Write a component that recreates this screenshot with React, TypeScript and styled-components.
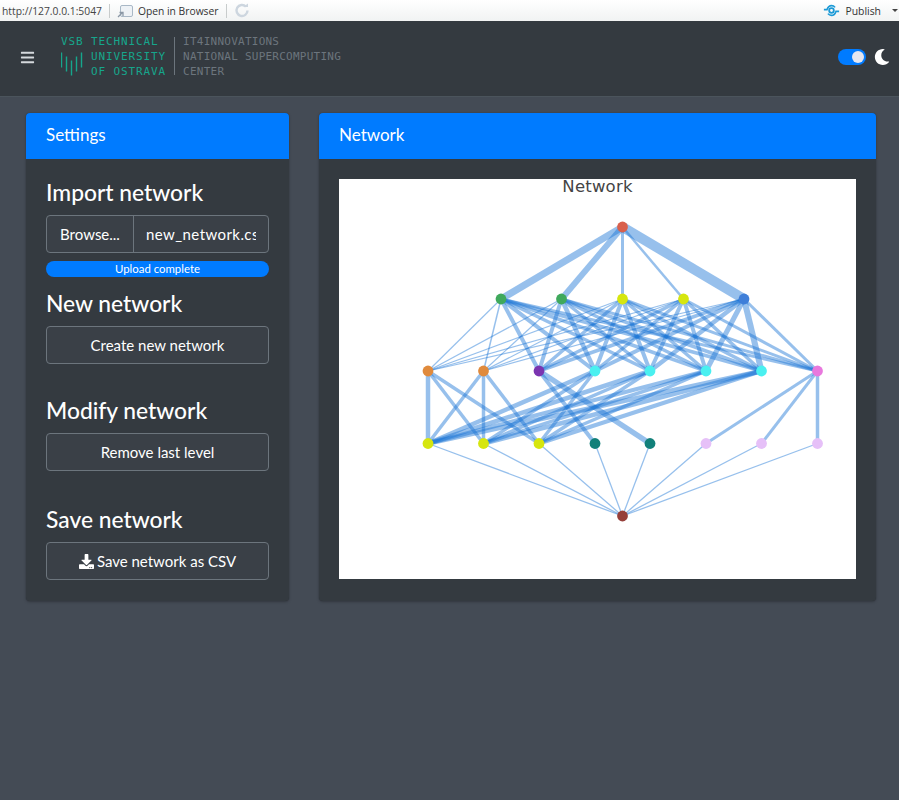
import React from "react"
import styled, { createGlobalStyle } from "styled-components"
import { FaBars, FaDownload, FaMoon } from "react-icons/fa"

const GlobalStyle = createGlobalStyle`
  html, body {
    margin: 0;
    padding: 0;
    background: #444b55;
  }
  * {
    box-sizing: border-box;
  }
`

const Page = styled.div`
  width: 899px;
  min-height: 800px;
  background: #444b55;
  font-family: "Lato", "Liberation Sans", sans-serif;
  color: #fff;
`

const ViewerBar = styled.div`
  height: 21px;
  display: flex;
  align-items: center;
  background: linear-gradient(#ffffff, #f1f3f3);
  font-family: "Open Sans", "Liberation Sans", sans-serif;
  font-size: 10.3px;
  color: #333;
  padding-left: 2px;
`
const BarUrl = styled.span`
  color: #444;
`
const BarSep = styled.span`
  width: 1px;
  height: 14px;
  margin: 0 7px 0 7px;
  background: #c8cccc;
`
const BarAction = styled.span`
  display: flex;
  align-items: center;
  gap: 5px;
`
const PublishGroup = styled.span`
  margin-left: auto;
  display: flex;
  align-items: center;
  gap: 5px;
  padding-right: 1px;
  font-size: 10.4px;
`
const Caret = styled.span`
  width: 0;
  height: 0;
  margin-left: 6px;
  border-left: 3px solid transparent;
  border-right: 3px solid transparent;
  border-top: 3px solid #444;
`

const Navbar = styled.header`
  height: 76px;
  display: flex;
  align-items: center;
  background: #343a40;
  border-bottom: 1px solid #4b545c;
  padding: 0 9px 0 20px;
`
const MenuButton = styled.span`
  display: flex;
  width: 41px;
  color: #d5d9dd;
  font-size: 15px;
  margin-top: -3px;
`
const Logo = styled.div`
  display: flex;
  align-items: center;
  font-family: "DejaVu Sans Mono", "Liberation Mono", monospace;
  font-size: 11px;
  line-height: 15px;
  margin-top: -5px;
`
const Vsb = styled.div`
  display: grid;
  grid-template-columns: 30px auto;
  color: #16a68c;
  letter-spacing: 0.88px;
  white-space: nowrap;
`
const VsbTop = styled.div`
  grid-column: 1 / 3;
`
const VsbMarks = styled.svg`
  grid-row: 2 / 4;
  margin-top: 3px;
`
const LogoDivider = styled.span`
  width: 1px;
  height: 38px;
  margin: 0 8px;
  background: #6c757d;
`
const Center = styled.div`
  color: #6c757d;
  letter-spacing: 0.25px;
  white-space: nowrap;
`
const ThemeControls = styled.div`
  margin-left: auto;
  display: flex;
  align-items: center;
  gap: 8px;
  margin-top: -4px;
`
const Toggle = styled.span`
  width: 28px;
  height: 16px;
  border-radius: 8px;
  background: #007bff;
  display: flex;
  justify-content: flex-end;
  align-items: center;
  padding-right: 2px;
`
const ToggleKnob = styled.span`
  width: 12px;
  height: 12px;
  border-radius: 50%;
  background: #e4e6f0;
`
const MoonWrap = styled.span`
  display: flex;
  color: #fff;
  font-size: 16px;
`

const Content = styled.main`
  display: grid;
  grid-template-columns: 263px 557px;
  gap: 30px;
  padding: 16px 23px 0 26px;
  align-items: start;
`
const Card = styled.section`
  background: #343a40;
  border-radius: 4px;
  overflow: hidden;
  box-shadow: 0 0 1px rgba(0, 0, 0, 0.25), 0 1px 3px rgba(0, 0, 0, 0.25);
`
const CardHeader = styled.div`
  height: 46px;
  display: flex;
  align-items: center;
  padding: 0 20px 3px 20px;
  background: #007bff;
  font-size: 17px;
`
const SettingsBody = styled.div`
  padding: 20px 20px 21px;
`
const PlotBody = styled.div`
  padding: 20px;
  height: 442px;
`
const Heading = styled.h3<{ $top?: number }>`
  margin: ${(p) => p.$top ?? 0}px 0 7px;
  font-size: 22.8px;
  line-height: 27px;
  padding-bottom: 2px;
  font-weight: 500;
`
const OutlineButton = styled.button`
  width: 100%;
  height: 38px;
  display: flex;
  align-items: center;
  justify-content: center;
  gap: 3px;
  background: #3a4047;
  border: 1px solid #6c757d;
  border-radius: 4px;
  color: #fff;
  font-family: inherit;
  font-size: 15px;
  padding: 0;
`
const FileGroup = styled.div`
  height: 38px;
  display: flex;
  align-items: center;
  border: 1px solid #6c757d;
  border-radius: 4px;
  background: #3a4047;
  font-size: 15px;
`
const BrowseLabel = styled.span`
  width: 87px;
  height: 100%;
  flex: none;
  display: flex;
  align-items: center;
  justify-content: center;
  border-right: 1px solid #6c757d;
`
const FileName = styled.span`
  flex: 1;
  min-width: 0;
  overflow: hidden;
  white-space: nowrap;
  margin: 0 12px;
  letter-spacing: 0.42px;
`
const Progress = styled.div`
  height: 16px;
  margin-top: 8px;
  border-radius: 8px;
  background: #007bff;
  display: flex;
  align-items: center;
  justify-content: center;
  font-size: 11.4px;
  padding-bottom: 1px;
`
const Plot = styled.svg`
  display: block;
  background: #fff;
`

const edgeBlue = "rgb(25, 115, 212)"

const levelX = [89, 144.5, 200, 256, 311, 367, 422.5, 478.5]
const upperX = [162, 222.5, 283.5, 344.5, 405]
const Y = [48, 120, 192, 264.5, 337]
const TOP_X = 283.5

const levels = [
  { y: Y[0], xs: [TOP_X], colors: ["#d9604c"] },
  { y: Y[1], xs: upperX, colors: ["#3fa95c", "#3fa95c", "#d6e60f", "#d6e60f", "#3f7fd9"] },
  {
    y: Y[2],
    xs: levelX,
    colors: ["#e08a3c", "#e08a3c", "#7b35b0", "#4af0f0", "#4af0f0", "#4af0f0", "#4af0f0", "#e878dd"],
  },
  {
    y: Y[3],
    xs: levelX,
    colors: ["#d6e60f", "#d6e60f", "#d6e60f", "#12807a", "#12807a", "#e6c0f8", "#e6c0f8", "#e6c0f8"],
  },
  { y: Y[4], xs: [TOP_X], colors: ["#963f3a"] },
]

// edge widths between levels, rows are the upper node, 0 means no edge
const weights = [
  [[7, 6, 3, 2.5, 10]],
  [
    [1.2, 1.5, 4, 4, 3.5, 3.5, 3.5, 3],
    [1.2, 1.2, 4, 4.5, 3.5, 3.5, 3.5, 3],
    [1.2, 1.2, 3.5, 4, 4, 3.5, 3.5, 3],
    [1.2, 1.2, 3.5, 3.5, 4, 4, 3.5, 3],
    [1.2, 1.2, 3.5, 4, 4.5, 5, 6, 3],
  ],
  [
    [4.5, 3.5, 3.5, 0, 0, 0, 0, 0],
    [3.5, 3.5, 3.5, 0, 0, 0, 0, 0],
    [0, 0, 0, 4, 5.5, 0, 0, 0],
    [4.5, 3.5, 3.5, 0, 0, 0, 0, 0],
    [4.5, 3.5, 3.5, 0, 0, 0, 0, 0],
    [4, 3.5, 3.5, 0, 0, 0, 0, 0],
    [4.5, 4.5, 4, 0, 0, 0, 0, 0],
    [0, 0, 0, 0, 0, 3, 3, 3.5],
  ],
  [[1.3], [1.3], [1.3], [1.3], [1.3], [1.3], [1.3], [1.3]],
]

const NetworkPlot = () => (
  <Plot width={517} height={400} viewBox="0 0 517 400">
    <text
      x={258.5}
      y={13}
      textAnchor="middle"
      fontFamily="'DejaVu Sans', Verdana, sans-serif"
      fontSize={16.5}
      letterSpacing={0.2}
      fill="#444"
    >
      Network
    </text>
    {weights.map((rows, l) =>
      rows.map((row, i) =>
        row.map((w, j) =>
          w > 0 ? (
            <line
              key={`${l}-${i}-${j}`}
              x1={levels[l].xs[i]}
              y1={levels[l].y}
              x2={levels[l + 1].xs[j]}
              y2={levels[l + 1].y}
              stroke={edgeBlue}
              strokeOpacity={0.45}
              strokeWidth={w}
            />
          ) : null
        )
      )
    )}
    {levels.map((level, l) =>
      level.xs.map((x, i) => (
        <circle key={`${l}-${i}`} cx={x} cy={level.y} r={5.4} fill={level.colors[i]} />
      ))
    )}
  </Plot>
)

const App = () => {
  return (
    <Page>
      <GlobalStyle />
      <ViewerBar>
        <BarUrl>http://127.0.0.1:5047</BarUrl>
        <BarSep />
        <BarAction>
          <svg width="16" height="14" viewBox="0 0 16 14">
            <rect x="3.5" y="1.5" width="12" height="11" rx="1.5" fill="#eef2f6" stroke="#a9b8c6" />
            <path d="M1 13l4-4M2.5 8.5h3.5v3.5" fill="none" stroke="#8a97a5" strokeWidth="1.3" />
          </svg>
          Open in Browser
        </BarAction>
        <BarSep />
        <svg width="16" height="17" viewBox="0 0 16 16">
          <path
            d="M13.5 8a5.5 5.5 0 1 1-1.6-3.9"
            fill="none"
            stroke="#cdd6df"
            strokeWidth="2.4"
          />
          <path d="M9 4.5h5V1z" fill="#cdd6df" />
        </svg>
        <PublishGroup>
          <svg width="17" height="13" viewBox="0 0 19 13">
            <circle cx="9.5" cy="6.5" r="2.6" fill="none" stroke="#1c9ad6" strokeWidth="2" />
            <path
              d="M1 5.5h3.5C5.5 2.5 7.5 1 9.5 1c1.5 0 3 .7 4 2M18 7.5h-3.5c-1 3-3 4.5-5 4.5-1.5 0-3-.7-4-2"
              fill="none"
              stroke="#1c9ad6"
              strokeWidth="1.8"
            />
          </svg>
          Publish
          <Caret />
        </PublishGroup>
      </ViewerBar>
      <Navbar>
        <MenuButton>
          <FaBars />
        </MenuButton>
        <Logo>
          <Vsb>
            <VsbTop>VSB TECHNICAL</VsbTop>
            <VsbMarks width="22" height="24" viewBox="0 0 22 24">
              <path
                d="M0.5 0.5v15M5.5 4.5v15M10.5 8.5v15M15.5 4.5v15M20.5 0.5v15"
                fill="none"
                stroke="#16a68c"
                strokeWidth="1.4"
              />
            </VsbMarks>
            <span>UNIVERSITY</span>
            <span>OF OSTRAVA</span>
          </Vsb>
          <LogoDivider />
          <Center>
            IT4INNOVATIONS
            <br />
            NATIONAL SUPERCOMPUTING
            <br />
            CENTER
          </Center>
        </Logo>
        <ThemeControls>
          <Toggle>
            <ToggleKnob />
          </Toggle>
          <MoonWrap>
            <FaMoon />
          </MoonWrap>
        </ThemeControls>
      </Navbar>
      <Content>
        <Card>
          <CardHeader>Settings</CardHeader>
          <SettingsBody>
            <Heading>Import network</Heading>
            <FileGroup>
              <BrowseLabel>Browse...</BrowseLabel>
              <FileName>new_network.csv</FileName>
            </FileGroup>
            <Progress>Upload complete</Progress>
            <Heading $top={13}>New network</Heading>
            <OutlineButton>Create new network</OutlineButton>
            <Heading $top={33}>Modify network</Heading>
            <OutlineButton>Remove last level</OutlineButton>
            <Heading $top={35}>Save network</Heading>
            <OutlineButton>
              <FaDownload />
              Save network as CSV
            </OutlineButton>
          </SettingsBody>
        </Card>
        <Card>
          <CardHeader>Network</CardHeader>
          <PlotBody>
            <NetworkPlot />
          </PlotBody>
        </Card>
      </Content>
    </Page>
  )
}

export default App
